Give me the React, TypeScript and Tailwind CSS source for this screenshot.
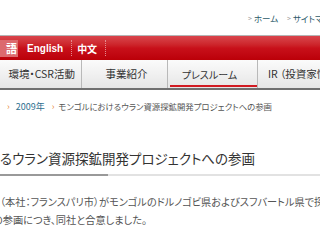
import React from "react";

const jp = "font-['Noto_Sans_CJK_JP','Noto_Sans',sans-serif] [font-feature-settings:'palt']";

export default function App() {
  return (
    <div className={`w-[320px] h-[248px] overflow-hidden bg-white flex flex-col ${jp}`}>
      {/* top links */}
      <div className="h-[35px] flex items-center pl-[248px] text-[8.5px] leading-none text-[#2c5a6a] whitespace-nowrap overflow-hidden">
        <span className="flex items-center gap-[2px] pt-[1px] w-[39px] shrink-0">
          <span className="text-[#999] text-[7px]">&gt;</span>ホーム
        </span>
        <span className="flex items-center gap-[2px] pt-[1px] shrink-0">
          <span className="text-[#999] text-[7px]">&gt;</span>サイトマップ
        </span>
      </div>
      <div className="h-px bg-[#b5b5b5]" />
      {/* red language bar */}
      <div className="h-[24px] bg-gradient-to-b from-[#d9444c] via-[#c8101a] to-[#bb0008] flex items-center text-white font-bold whitespace-nowrap">
        <div className="h-[17px] w-[18px] bg-[#dc6a6e] flex items-center justify-end pr-[2px] text-[11px] overflow-hidden">
          <span className="-mr-[1px]">語</span>
        </div>
        <span className="ml-[9px] text-[10px] font-['Liberation_Sans',sans-serif]">English</span>
        <span className="ml-[8px] h-[16px] border-l border-dotted border-[#e48a8e]" />
        <span className="ml-[5px] text-[10px]">中文</span>
        <span className="ml-[8px] h-[16px] border-l border-dotted border-[#e48a8e]" />
      </div>
      {/* nav */}
      <div className="h-[28px] bg-gradient-to-b from-[#fbfbfb] to-[#e6e6e6] flex text-[10.5px] text-[#333] whitespace-nowrap">
        <div className="w-[82px] flex items-center justify-end pr-[6px] border-r border-[#b9b9b9]">
          環境・CSR活動
        </div>
        <div className="w-[86px] flex items-center justify-center pl-[4px] border-r border-[#b9b9b9]">
          事業紹介
        </div>
        <div className="w-[90px] flex items-center justify-center pr-[6px] border-r border-[#b9b9b9] relative text-[10px]">
          プレスルーム
          <span className="absolute left-[2px] right-0 bottom-[1px] h-[2px] bg-[#d11a22]" />
        </div>
        <div className="flex-1 flex items-center pl-[10px] overflow-hidden">
          IR （投資家情報）
        </div>
      </div>
      <div className="h-[2px] bg-[#707070]" />
      {/* breadcrumb */}
      <div className="mt-[10px] h-[12px] flex items-center text-[7.4px] leading-none whitespace-nowrap text-[#555]">
        <span className="ml-[7px] text-[#e98a3c] text-[9px]">›</span>
        <span className="ml-[6px] text-[#2f6f8f] text-[9px]">2009年</span>
        <span className="ml-[7px] text-[#e98a3c] text-[9px]">›</span>
        <span className="ml-[4px] text-[8.4px]">モンゴルにおけるウラン資源探鉱開発プロジェクトへの参画</span>
      </div>
      {/* heading */}
      <div className="mt-[37px] h-[20px] flex items-center text-[13.5px] leading-none text-[#333] whitespace-nowrap">
        るウラン資源探鉱開発プロジェクトへの参画
      </div>
      <div className="mt-[5px] flex h-[2px]">
        <div className="w-[108px] bg-[#999]" />
        <div className="flex-1 bg-[#e2e2e2]" />
      </div>
      {/* body */}
      <div className="mt-[17px] text-[10.2px] leading-[18px] text-[#555] whitespace-nowrap">
        <div>（本社：フランスパリ市）がモンゴルのドルノゴビ県およびスフバートル県で探鉱</div>
        <div className="-ml-[7px]">の参画につき、同社と合意しました。</div>
      </div>
    </div>
  );
}
